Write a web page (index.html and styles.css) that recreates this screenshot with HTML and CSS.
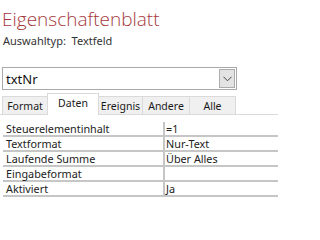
FILE: index.html
```html
<!DOCTYPE html>
<html lang="de">
<head>
<meta charset="utf-8">
<link rel="stylesheet" href="styles.css">
</head>
<body>
<div class="sheet">
  <h1 class="title">Eigenschaftenblatt</h1>
  <div class="seltype">Auswahltyp:&nbsp; Textfeld</div>
  <div class="combo">
    <span class="combo-text">txtNr</span>
    <span class="combo-btn"><svg width="9" height="6" viewBox="0 0 9 6"><path d="M0.5 0.8 L4.5 4.8 L8.5 0.8" fill="none" stroke="#444" stroke-width="1"/></svg></span>
  </div>
  <div class="tabs">
    <div class="tab t-format">Format</div>
    <div class="tab active t-daten">Daten</div>
    <div class="tab t-ereignis">Ereignis</div>
    <div class="tab t-andere">Andere</div>
    <div class="tab t-alle">Alle</div>
  </div>
  <div class="grid">
    <div class="row"><div class="label">Steuerelementinhalt</div><div class="value">=1</div></div>
    <div class="row"><div class="label">Textformat</div><div class="value">Nur-Text</div></div>
    <div class="row"><div class="label">Laufende Summe</div><div class="value">Über Alles</div></div>
    <div class="row"><div class="label">Eingabeformat</div><div class="value"></div></div>
    <div class="row"><div class="label">Aktiviert</div><div class="value">Ja</div></div>
  </div>
</div>
</body>
</html>
```
FILE: styles.css
```css
html, body {
  margin: 0;
  padding: 0;
  background: #ffffff;
}
body {
  font-family: "Noto Sans", "Open Sans", sans-serif;
  color: #222222;
  width: 278px;
  height: 209px;
  overflow: hidden;
}
.sheet {
  display: flex;
  flex-direction: column;
}
.title {
  margin: 0;
  padding: 6px 0 0 2px;
  height: 32px;
  font-family: "Open Sans", "Noto Sans", sans-serif;
  font-weight: 300;
  font-size: 19px;
  line-height: 26px;
  color: #a4373a;
  box-sizing: border-box;
  white-space: nowrap;
}
.seltype {
  padding-left: 3px;
  height: 21px;
  font-size: 11px;
  line-height: 18px;
  color: #333333;
  box-sizing: border-box;
}
.combo {
  margin: 14px 0 0 2px;
  width: 235px;
  height: 23px;
  box-sizing: border-box;
  border: 1px solid #a9a9a9;
  display: flex;
  align-items: center;
}
.combo-text {
  padding-left: 3px;
  font-size: 13px;
  color: #111111;
  line-height: 20px;
}
.combo-btn {
  margin-left: auto;
  margin-right: 1px;
  width: 16px;
  height: 19px;
  box-sizing: border-box;
  border: 1px solid #acacac;
  background: #e3e3e3;
  display: flex;
  align-items: center;
  justify-content: center;
}
.combo-btn svg {
  display: block;
  margin-top: 1px;
}
.tabs {
  margin-top: 3px;
  padding-left: 2px;
  height: 21px;
  display: flex;
  align-items: flex-end;
  border-bottom: 1px solid #dadada;
}
.tab {
  height: 18px;
  box-sizing: border-box;
  border: 1px solid #dadada;
  border-bottom: none;
  background: #f0f0f0;
  font-size: 10.5px;
  line-height: 16px;
  padding-top: 1px;
  text-align: center;
  color: #1a1a1a;
  margin-left: -1px;
  white-space: nowrap;
}
.tab:first-child {
  margin-left: 0;
}
.tab.active {
  height: 22px;
  background: #ffffff;
  margin-bottom: -1px;
  line-height: 15px;
  padding-top: 2px;
  position: relative;
  z-index: 1;
}
.t-format { width: 46px; }
.t-daten { width: 52px; }
.t-ereignis { width: 45px; }
.t-andere { width: 48px; }
.t-alle { width: 47px; }
.grid {
  margin-top: 7px;
  margin-left: 3px;
}
.row {
  display: flex;
  height: 15px;
  box-sizing: border-box;
  border-bottom: 2px solid #c6c6c6;
  font-size: 10.8px;
  line-height: 13px;
}
.label {
  width: 160px;
  padding-left: 3px;
  box-sizing: border-box;
  color: #222222;
  white-space: nowrap;
}
.value {
  flex: 1;
  border-left: 2px solid #c6c6c6;
  padding-left: 1px;
  color: #222222;
  white-space: nowrap;
}
```
